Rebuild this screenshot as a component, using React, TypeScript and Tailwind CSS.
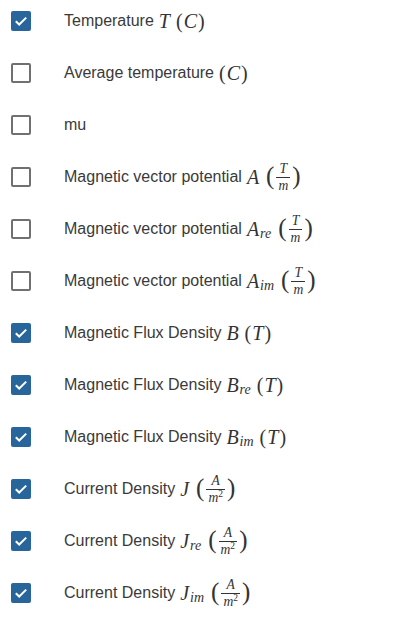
import React from "react";

const serif = "font-['Liberation_Serif','Times_New_Roman',serif]";

const Mi = ({ children }: { children: React.ReactNode }) => (
  <span className={`${serif} italic`}>{children}</span>
);

const Sub = ({ children }: { children: React.ReactNode }) => (
  <span className={`${serif} italic text-[0.7em] relative top-[0.3em] ml-[1px]`}>{children}</span>
);

const Paren = ({ children, first }: { children: React.ReactNode; first?: boolean }) => (
  <span className={`${serif} ${first ? "" : "ml-[6px]"}`}>
    (<span className="italic px-[1px]">{children}</span>)
  </span>
);

const Frac = ({ num, den }: { num: React.ReactNode; den: React.ReactNode }) => (
  <span className={`${serif} inline-flex items-center ml-[7px]`}>
    <span className="text-[1.25em] leading-none relative top-[-0.05em]">(</span>
    <span className="inline-flex flex-col items-center mx-[2px] text-[0.68em] leading-[1] italic">
      <span className="px-[2px]">{num}</span>
      <span className="h-px w-full bg-[#333] my-[1px]" />
      <span className="px-[2px]">{den}</span>
    </span>
    <span className="text-[1.25em] leading-none relative top-[-0.05em]">)</span>
  </span>
);

type Row = { checked: boolean; label: string; math?: React.ReactNode };

const Tm = <Frac num="T" den="m" />;
const Am2 = (
  <Frac
    num="A"
    den={
      <span>
        m<span className="text-[0.7em] not-italic relative top-[-0.5em]">2</span>
      </span>
    }
  />
);

const rows: Row[] = [
  { checked: true, label: "Temperature", math: <><Mi>T</Mi><Paren>C</Paren></> },
  { checked: false, label: "Average temperature", math: <Paren first>C</Paren> },
  { checked: false, label: "mu" },
  { checked: false, label: "Magnetic vector potential", math: <><Mi>A</Mi>{Tm}</> },
  { checked: false, label: "Magnetic vector potential", math: <><Mi>A</Mi><Sub>re</Sub>{Tm}</> },
  { checked: false, label: "Magnetic vector potential", math: <><Mi>A</Mi><Sub>im</Sub>{Tm}</> },
  { checked: true, label: "Magnetic Flux Density", math: <><Mi>B</Mi><Paren>T</Paren></> },
  { checked: true, label: "Magnetic Flux Density", math: <><Mi>B</Mi><Sub>re</Sub><Paren>T</Paren></> },
  { checked: true, label: "Magnetic Flux Density", math: <><Mi>B</Mi><Sub>im</Sub><Paren>T</Paren></> },
  { checked: true, label: "Current Density", math: <><Mi>J</Mi>{Am2}</> },
  { checked: true, label: "Current Density", math: <><Mi>J</Mi><Sub>re</Sub>{Am2}</> },
  { checked: true, label: "Current Density", math: <><Mi>J</Mi><Sub>im</Sub>{Am2}</> },
];

const Box = ({ checked }: { checked: boolean }) =>
  checked ? (
    <span className="w-5 h-5 rounded-[2px] bg-[#28659b] flex items-center justify-center shrink-0">
      <svg width="20" height="20" viewBox="0 0 20 20" fill="none">
        <path d="M4.8 10.2 L8.2 13.5 L15.2 6.6" stroke="white" strokeWidth="2" />
      </svg>
    </span>
  ) : (
    <span className="w-5 h-5 rounded-[2px] border-2 border-[#707070] bg-white shrink-0" />
  );

export default function App() {
  return (
    <div className="w-[412px] h-[623px] bg-white pt-[11px] pl-[11px] flex flex-col gap-[32px] font-['Liberation_Sans',Arial,sans-serif] text-[16px] text-[#3a3a3a]">
      {rows.map((r, i) => (
        <div key={i} className="flex items-center h-5">
          <Box checked={r.checked} />
          <div className="ml-[33px] flex items-center whitespace-nowrap">
            <span>{r.label}</span>
            {r.math && (
              <span className="ml-[5px] text-[20px] text-[#333] inline-flex items-center">{r.math}</span>
            )}
          </div>
        </div>
      ))}
    </div>
  );
}
